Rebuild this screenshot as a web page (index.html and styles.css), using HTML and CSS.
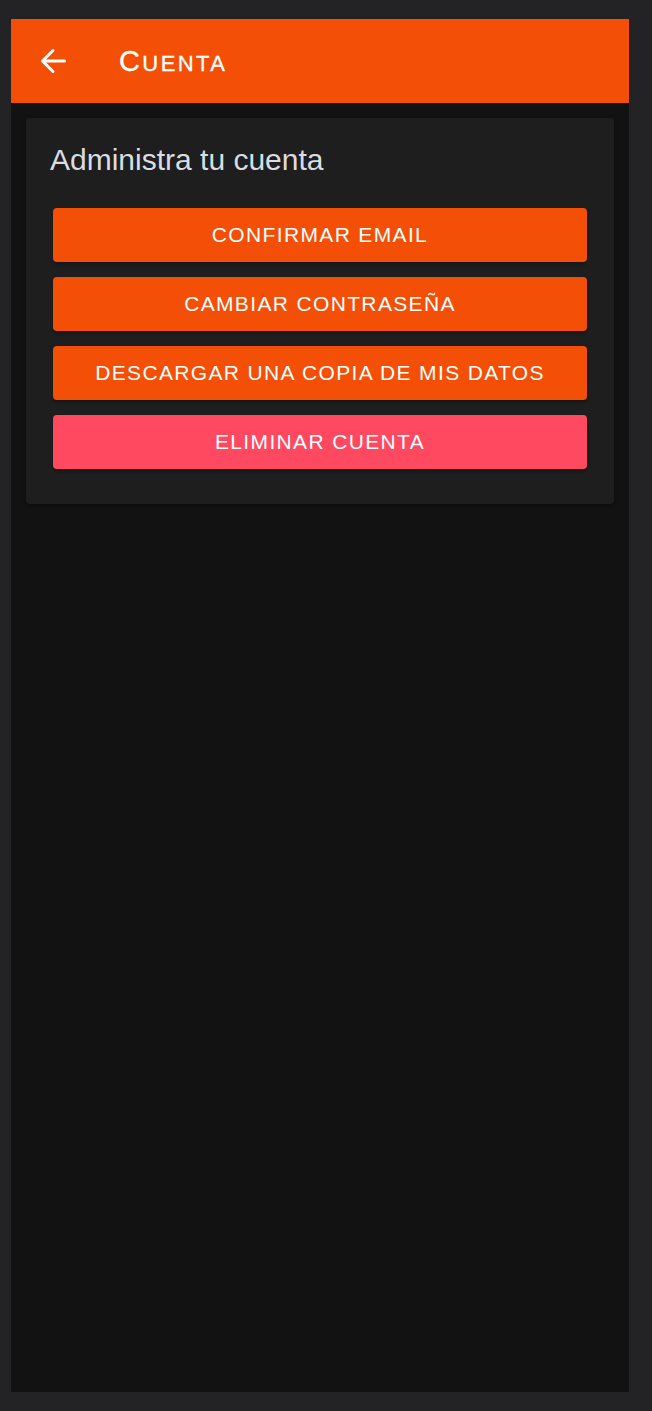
FILE: index.html
```html
<!DOCTYPE html>
<html lang="es">
<head>
<meta charset="utf-8">
<title>Cuenta</title>
<link rel="stylesheet" href="styles.css">
</head>
<body>
<div class="frame">
  <header class="toolbar">
    <button class="back" aria-label="Volver">
      <svg width="28" height="26" viewBox="0 0 28 26" aria-hidden="true">
        <path d="M14 2.5 L3.5 13 L14 23.5 M3.5 13 H25.5" fill="none" stroke="#fff" stroke-width="3" stroke-linecap="round" stroke-linejoin="round"/>
      </svg>
    </button>
    <h1 class="title">C<span class="sc">uenta</span></h1>
  </header>
  <main class="content">
    <section class="card">
      <h2 class="card-title">Administra tu cuenta</h2>
      <div class="actions">
        <button class="btn">Confirmar email</button>
        <button class="btn">Cambiar contraseña</button>
        <button class="btn">Descargar una copia de mis datos</button>
        <button class="btn btn-danger">Eliminar cuenta</button>
      </div>
    </section>
  </main>
</div>
</body>
</html>
```
FILE: styles.css
```css
html, body {
  margin: 0;
  padding: 0;
}
body {
  background: #232325;
  font-family: "Liberation Sans", Arial, sans-serif;
  padding: 19px 23px 19px 11px;
  height: 1411px;
  box-sizing: border-box;
}
.frame {
  height: 1373px;
  background: #121212;
  display: flex;
  flex-direction: column;
}
.toolbar {
  height: 84px;
  background: #f44f07;
  display: flex;
  align-items: center;
  flex-shrink: 0;
}
.back {
  margin-left: 27px;
  width: 30px;
  height: 30px;
  padding: 0;
  border: 0;
  background: transparent;
  display: flex;
  align-items: center;
  justify-content: center;
}
.back svg {
  display: block;
}
.title {
  margin: 0 0 0 51px;
  font-size: 29px;
  font-weight: normal;
  letter-spacing: 2.4px;
  color: #fff;
  line-height: 34px;
  padding-top: 2px;
  -webkit-text-stroke: 0.3px #fff;
}
.title .sc {
  font-size: 22px;
  text-transform: uppercase;
}
.content {
  padding: 15px;
}
.card {
  background: #1e1e1e;
  border-radius: 4px;
  padding: 24px 27px 35px 27px;
  box-shadow: 0 2px 4px rgba(0,0,0,0.35);
}
.card-title {
  margin: 0 0 30px -3px;
  font-size: 30px;
  line-height: 36px;
  font-weight: normal;
  color: #d9dde2;
}
.actions {
  display: flex;
  flex-direction: column;
  gap: 15px;
}
.btn {
  height: 54px;
  border: 0;
  border-radius: 4px;
  background: #f44f07;
  color: #fff;
  font-family: "Liberation Sans", Arial, sans-serif;
  font-size: 21px;
  letter-spacing: 1.35px;
  text-transform: uppercase;
  display: flex;
  align-items: center;
  justify-content: center;
  box-shadow: 0 2px 3px rgba(0,0,0,0.3);
  padding: 0;
}
.btn-danger {
  background: #ff4961;
}
```
